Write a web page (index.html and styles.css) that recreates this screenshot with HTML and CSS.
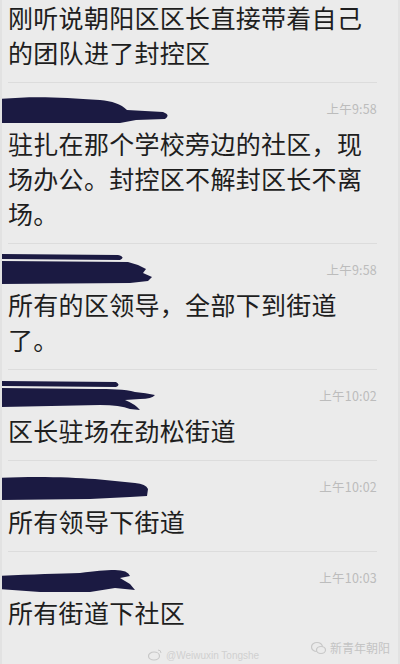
FILE: index.html
```html
<!DOCTYPE html>
<html lang="zh-CN">
  <head>
    <meta charset="UTF-8" />
    <meta name="viewport" content="width=device-width, initial-scale=1" />
    <title>聊天记录</title>
    <link rel="stylesheet" href="styles.css">
  </head>
  <body>
    <div class="chat">
      <div class="msg first">
        <p class="text">刚听说朝阳区区长直接带着自己的团队进了封控区</p>
      </div>

      <div class="msg">
        <div class="head">
          <svg class="scribble" viewBox="0 0 180 30" width="180" height="30">
            <path d="M0,6 C30,3 60,4 100,7 C112,8 121,11 127,17 L163,19 Q171,22 165,26 L136,27 L120,30 L0,30 Z" />
          </svg>
          <span class="time">上午9:58</span>
        </div>
        <p class="text">驻扎在那个学校旁边的社区，现场办公。封控区不解封区长不离场。</p>
      </div>

      <div class="msg">
        <div class="head">
          <svg class="scribble" viewBox="0 0 180 30" width="180" height="30">
            <path d="M0,0 L118,1 Q126,3 120,6 L0,5 Z" />
            <path d="M0,7 L128,8 L138,11 L146,15 L143,19 L152,23 L148,27 L130,29 L0,30 Z" />
          </svg>
          <span class="time">上午9:58</span>
        </div>
        <p class="text">所有的区领导，全部下到街道了。</p>
      </div>

      <div class="msg">
        <div class="head">
          <svg class="scribble" viewBox="0 0 180 30" width="180" height="30">
            <path d="M0,1 L116,2 Q121,5 116,7 L0,6 Z" />
            <path d="M0,8 L95,9 C110,9 125,9 135,12 Q146,13 155,15 Q152,19 140,19 L125,20 Q135,24 140,30 L130,29 Q120,25 100,25 L0,27 Z" />
          </svg>
          <span class="time">上午10:02</span>
        </div>
        <p class="text">区长驻场在劲松街道</p>
      </div>

      <div class="msg">
        <div class="head">
          <svg class="scribble" viewBox="0 0 180 30" width="180" height="30">
            <path d="M0,7 C30,5 70,6 95,8 L135,12 Q146,13 148,18 L147,25 L130,26 L90,28 L0,29 Z" />
          </svg>
          <span class="time">上午10:02</span>
        </div>
        <p class="text">所有领导下街道</p>
      </div>

      <div class="msg last">
        <div class="head">
          <svg class="scribble" viewBox="0 0 180 30" width="180" height="30">
            <path d="M0,14 C30,12 60,12 80,11 C95,9 105,8 115,8 Q128,8 130,14 L120,16 L130,22 L135,28 L115,26 L90,30 L40,30 L0,27 Z" />
          </svg>
          <span class="time">上午10:03</span>
        </div>
        <p class="text">所有街道下社区</p>
      </div>
    </div>

    <div class="mark-weibo">
      <svg viewBox="0 0 14 12" width="14" height="12">
        <ellipse cx="6" cy="7" rx="5.5" ry="4" fill="none" stroke="#c8c8c8" stroke-width="1.2" />
        <path d="M10,1 Q13,1 13,4" fill="none" stroke="#c8c8c8" stroke-width="1" />
      </svg>
      <span>@Weiwuxin Tongshe</span>
    </div>
    <div class="mark-wechat">
      <svg viewBox="0 0 16 14" width="16" height="14">
        <ellipse cx="6" cy="6" rx="5.5" ry="4.5" fill="none" stroke="#c8c8c8" stroke-width="1.2" />
        <ellipse cx="10" cy="9" rx="4.5" ry="3.5" fill="#ebebeb" stroke="#c8c8c8" stroke-width="1.2" />
      </svg>
      <span>新青年朝阳</span>
    </div>
  </body>
</html>
```

FILE: styles.css
```css
* {
  box-sizing: border-box;
}
html,
body {
  margin: 0;
  padding: 0;
  background: #ebebeb;
}
body {
  position: relative;
  width: 400px;
  height: 664px;
  overflow: hidden;
  font-family: "Noto Sans CJK SC", "Noto Sans", sans-serif;
  color: #1e1e1e;
  border-left: 2px solid #e2e2e2;
  border-right: 2px solid #e2e2e2;
}
.chat {
  display: flex;
  flex-direction: column;
}
.msg {
  padding: 10px 0 0 6px;
  margin-right: 21px;
}
.msg .text {
  border-bottom: 1px solid #dcdcdc;
  padding-bottom: 12px;
}
.msg.last .text {
  border-bottom: none;
}
.msg.first {
  padding-top: 0;
}
.head {
  display: flex;
  align-items: center;
  justify-content: space-between;
  height: 30px;
  margin-left: -8px;
}
.scribble {
  display: block;
  fill: #1b1a42;
}
.time {
  font-family: "Noto Sans CJK SC", "Liberation Sans", sans-serif;
  font-size: 12.5px;
  color: #bcbcbc;
  letter-spacing: 0.2px;
}
.text {
  margin: 3px 0 0;
  font-size: 25px;
  line-height: 35px;
  letter-spacing: 0.3px;
}
.msg.first .text {
  margin-top: 0;
}
.mark-weibo {
  position: absolute;
  left: 146px;
  bottom: 3px;
  display: flex;
  align-items: center;
  gap: 4px;
  font-family: "Liberation Sans", sans-serif;
  font-size: 10px;
  color: #d0d0d0;
}
.mark-wechat {
  position: absolute;
  right: 8px;
  bottom: 8px;
  display: flex;
  align-items: center;
  gap: 3px;
  font-size: 12px;
  color: #c4c4c4;
}
```
